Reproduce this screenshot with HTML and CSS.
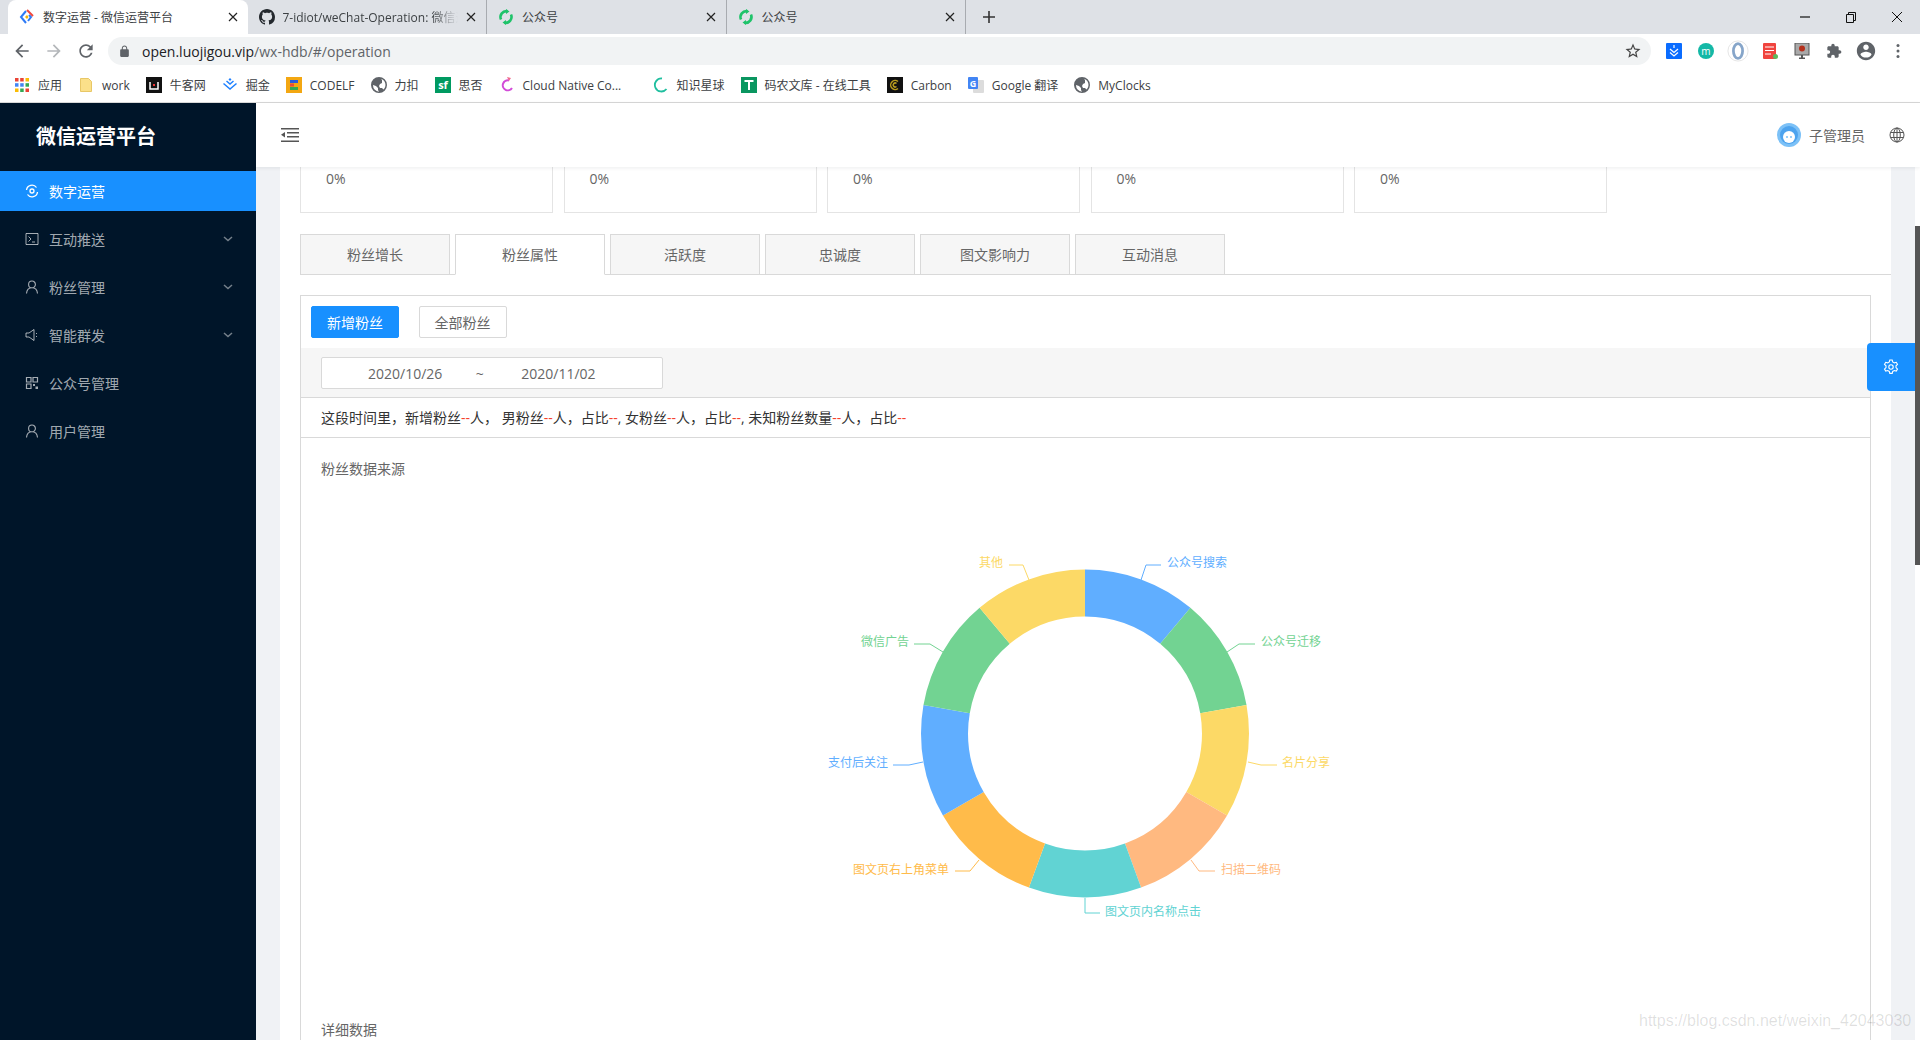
FILE: index.html
```html
<!DOCTYPE html>
<html lang="zh-CN">
<head>
    <meta charset="UTF-8">
    <title>数字运营 - 微信运营平台</title>
    <link rel="stylesheet" href="styles.css">
</head>
<body>

<svg class="defs" width="0" height="0">
    <symbol id="globe" viewBox="0 0 16 16"><path fill="#5f6368" d="M8 0a8 8 0 1 0 0 16A8 8 0 0 0 8 0zM2 8l3 1 2 2v2l1 1.8A6.5 6.5 0 0 1 2 8zm10.5 4.6L11 11H9l-1-2 1-2 2-1V3l-1-1.2a6.5 6.5 0 0 1 2.500 10.800z"/></symbol>
    <symbol id="wx" viewBox="0 0 16 16"><g fill="none" stroke="#1fc36a" stroke-width="2.600"><path d="M3 10.500A6 6 0 0 1 9.500 2.200"/><path d="M13 5.500A6 6 0 0 1 6.500 13.800"/></g><path fill="#1fc36a" d="M8 0l3.500 2.500L8 5zM8 16l-3.500-2.500L8 11z"/></symbol>
    <symbol id="close" viewBox="0 0 10 10"><path d="M1 1l8 8M9 1l-8 8" stroke="#222" stroke-width="1.200" fill="none"/></symbol>
    <symbol id="user" viewBox="0 0 14 14"><path fill="none" stroke="currentColor" stroke-width="1.100" d="M7 1a3.400 3.400 0 1 1 0 6.800A3.400 3.400 0 0 1 7 1zM1.500 13.500C1.800 10 4 7.800 7 7.800s5.200 2.200 5.500 5.700"/></symbol>
    <symbol id="chev" viewBox="0 0 10 6"><path fill="none" stroke="currentColor" stroke-width="1.500" d="M1 1l4 3.500L9 1"/></symbol>
</svg>

<header class="chrome">
    <div class="tabstrip">
        <div class="tab tab-active">
            <svg class="fav" viewBox="0 0 16 16"><path fill="none" stroke="#2f7bf6" stroke-width="2" d="M7 2L2 8l5 6"/><path fill="none" stroke="#2f7bf6" stroke-width="2" d="M10 6l2 2-3 4"/><path fill="none" stroke="#f0483e" stroke-width="2" d="M8 1l6 6"/><path fill="#f5b400" d="M6 8l2-2 1.500 2L8 10z"/></svg>
            <span class="tab-title">数字运营 - 微信运营平台</span>
            <svg class="tab-x"><use href="#close"/></svg>
        </div>
        <div class="tab">
            <svg class="fav" viewBox="0 0 16 16"><path fill="#24292e" d="M8 0C3.580 0 0 3.580 0 8c0 3.540 2.290 6.530 5.470 7.590.4.070.55-.17.55-.38 0-.19-.01-.82-.01-1.490-2.010.37-2.530-.49-2.690-.94-.09-.23-.48-.94-.82-1.130-.28-.15-.68-.52-.01-.53.63-.01 1.080.58 1.230.82.72 1.210 1.870.87 2.330.66.07-.52.28-.87.51-1.070-1.780-.2-3.640-.89-3.640-3.950 0-.87.31-1.590.82-2.150-.08-.2-.36-1.020.08-2.120 0 0 .67-.21 2.200.82.64-.18 1.320-.27 2-.27.68 0 1.360.09 2 .27 1.530-1.040 2.200-.82 2.200-.82.44 1.100.16 1.920.08 2.120.51.56.82 1.270.82 2.150 0 3.070-1.870 3.750-3.650 3.950.29.25.54.73.54 1.480 0 1.070-.01 1.930-.01 2.200 0 .21.15.46.55.38A8.013 8.013 0 0 0 16 8c0-4.420-3.580-8-8-8z"/></svg>
            <span class="tab-title tab-fade">7-idiot/weChat-Operation: 微信运营平台</span>
            <svg class="tab-x"><use href="#close"/></svg>
        </div>
        <div class="tab">
            <svg class="fav"><use href="#wx"/></svg>
            <span class="tab-title">公众号</span>
            <svg class="tab-x"><use href="#close"/></svg>
        </div>
        <div class="tab">
            <svg class="fav"><use href="#wx"/></svg>
            <span class="tab-title">公众号</span>
            <svg class="tab-x"><use href="#close"/></svg>
        </div>
        <svg class="tab-plus" viewBox="0 0 14 14"><path d="M7 1v12M1 7h12" stroke="#333" stroke-width="1.600"/></svg>
        <div class="win-btns">
            <svg viewBox="0 0 12 12"><path d="M1 6h10" stroke="#111" stroke-width="1.200"/></svg>
            <svg viewBox="0 0 12 12"><path fill="none" stroke="#111" d="M1.500 3.500h7v8h-7zM3.500 3.500v-2h7v8h-2"/></svg>
            <svg viewBox="0 0 12 12"><path d="M1 1l10 10M11 1L1 11" stroke="#111"/></svg>
        </div>
    </div>

    <div class="toolbar">
        <svg class="nav-icon" viewBox="0 0 24 24"><path fill="#5f6368" d="M20 11H7.830l5.590-5.590L12 4l-8 8 8 8 1.410-1.410L7.830 13H20v-2z"/></svg>
        <svg class="nav-icon" viewBox="0 0 24 24"><path fill="#b4b7ba" d="M12 4l-1.410 1.410L16.170 11H4v2h12.170l-5.580 5.590L12 20l8-8z"/></svg>
        <svg class="nav-icon" viewBox="0 0 24 24"><path fill="#5f6368" d="M17.650 6.350C16.200 4.900 14.210 4 12 4c-4.420 0-7.990 3.580-7.990 8s3.570 8 7.990 8c3.730 0 6.840-2.550 7.730-6h-2.080c-.82 2.330-3.040 4-5.650 4-3.310 0-6-2.690-6-6s2.690-6 6-6c1.660 0 3.140.69 4.220 1.780L13 11h7V4l-2.350 2.350z"/></svg>
        <div class="omnibox">
            <svg class="lock" viewBox="0 0 24 24"><path fill="#5f6368" d="M18 8h-1V6c0-2.760-2.240-5-5-5S7 3.240 7 6v2H6c-1.100 0-2 .9-2 2v10c0 1.100.9 2 2 2h12c1.100 0 2-.9 2-2V10c0-1.100-.9-2-2-2zm-2.900 0H8.900V6c0-1.710 1.390-3.100 3.100-3.100 1.710 0 3.100 1.390 3.100 3.100v2z"/></svg>
            <span class="url">open.luojigou.vip<span class="url-path">/wx-hdb/#/operation</span></span>
            <svg class="star" viewBox="0 0 24 24"><path fill="#444" d="M22 9.240l-7.190-.62L12 2 9.190 8.630 2 9.240l5.460 4.730L5.820 21 12 17.270 18.180 21l-1.630-7.030L22 9.240zM12 15.400l-3.760 2.270 1-4.280-3.320-2.880 4.380-.38L12 6.100l1.710 4.040 4.380.38-3.320 2.880 1 4.280L12 15.400z"/></svg>
        </div>
        <div class="exts">
            <svg viewBox="0 0 16 16"><rect width="16" height="16" fill="#0a6cff" rx="1"/><path fill="none" stroke="#fff" stroke-width="1.200" d="M4 6l4 3.500L12 6M4 9.500l4 3.500 4-3.500M8 2v3"/></svg>
            <svg viewBox="0 0 16 16"><circle cx="8" cy="8" r="8" fill="#14b8a6"/><text x="8" y="11.500" class="ext-letter">m</text></svg>
            <svg class="ext-big" viewBox="0 0 24 24"><circle cx="12" cy="12" r="11" fill="#fff" stroke="#e3e3e3"/><ellipse cx="12" cy="12" rx="5" ry="8" fill="none" stroke="#86a5c9" stroke-width="3"/></svg>
            <svg viewBox="0 0 16 16"><rect x="1" width="13" height="16" fill="#f0443e" rx="1"/><path stroke="#fff" d="M3 4h9M3 7.500h9M3 11h6"/><circle cx="13.500" cy="13.500" r="2.500" fill="#5cb85c"/></svg>
            <svg viewBox="0 0 16 16"><rect x="1" width="14" height="12" fill="#a9a9a9" stroke="#555"/><circle cx="8" cy="5.500" r="3" fill="#b5301c"/><path stroke="#555" stroke-width="2" d="M8 12v3M5 15.500h6"/></svg>
            <svg viewBox="0 0 24 24"><path fill="#5f6368" d="M20.500 11H19V7c0-1.100-.9-2-2-2h-4V3.500C13 2.120 11.880 1 10.500 1S8 2.120 8 3.500V5H4c-1.100 0-1.990.9-1.990 2v3.800H3.500c1.490 0 2.700 1.210 2.700 2.700s-1.210 2.700-2.700 2.700H2V20c0 1.100.9 2 2 2h3.800v-1.500c0-1.490 1.210-2.700 2.700-2.700 1.490 0 2.700 1.210 2.700 2.700V22H17c1.100 0 2-.9 2-2v-4h1.500c1.380 0 2.500-1.120 2.500-2.500S21.880 11 20.500 11z"/></svg>
            <svg class="ext-big" viewBox="0 0 24 24"><path fill="#5f6368" d="M12 2C6.480 2 2 6.480 2 12s4.480 10 10 10 10-4.480 10-10S17.520 2 12 2zm0 3c1.660 0 3 1.340 3 3s-1.340 3-3 3-3-1.340-3-3 1.340-3 3-3zm0 14.200c-2.500 0-4.710-1.280-6-3.220.03-1.990 4-3.080 6-3.080 1.990 0 5.970 1.090 6 3.080-1.290 1.940-3.500 3.220-6 3.220z"/></svg>
            <svg viewBox="0 0 16 16"><g fill="#5f6368"><circle cx="8" cy="2.500" r="1.500"/><circle cx="8" cy="8" r="1.500"/><circle cx="8" cy="13.500" r="1.500"/></g></svg>
        </div>
    </div>

    <div class="bookmarks">
        <div class="bm">
            <svg viewBox="0 0 16 16"><g fill="#ea4335"><rect x="1" y="1" width="3.500" height="3.500"/><rect x="6.200" y="1" width="3.500" height="3.500"/></g><rect x="11.500" y="1" width="3.500" height="3.500" fill="#fbbc05"/><g fill="#4285f4"><rect x="1" y="6.200" width="3.500" height="3.500"/><rect x="6.200" y="6.200" width="3.500" height="3.500"/></g><rect x="11.500" y="6.200" width="3.500" height="3.500" fill="#34a853"/><g fill="#fbbc05"><rect x="1" y="11.500" width="3.500" height="3.500"/></g><g fill="#34a853"><rect x="6.200" y="11.500" width="3.500" height="3.500"/></g><rect x="11.500" y="11.500" width="3.500" height="3.500" fill="#ea4335"/></svg>
            <span>应用</span>
        </div>
        <div class="bm">
            <svg viewBox="0 0 16 16"><path fill="#fbe08a" stroke="#e8c766" d="M2.500 1.500h8l3 3v10h-11z"/></svg>
            <span>work</span>
        </div>
        <div class="bm">
            <svg viewBox="0 0 16 16"><rect width="16" height="16" fill="#111"/><path fill="none" stroke="#fff" stroke-width="1.500" d="M4 5v7h8V5"/><path stroke="#e33" stroke-width="2" d="M7 8h2"/></svg>
            <span>牛客网</span>
        </div>
        <div class="bm">
            <svg viewBox="0 0 16 16"><path fill="none" stroke="#1e80ff" stroke-width="1.500" d="M1.500 6.500L8 12l6.500-5.500M4.500 4L8 7l3.500-3"/><path fill="#1e80ff" d="M8 1l1.500 1.500L8 4 6.500 2.500z"/></svg>
            <span>掘金</span>
        </div>
        <div class="bm">
            <svg viewBox="0 0 16 16"><rect width="16" height="16" fill="#f3a712"/><rect x="4" y="3" width="8" height="3" fill="#2a5bd7"/><rect x="4" y="6.500" width="4" height="3" fill="#e84a3c"/><rect x="4" y="10" width="8" height="3" fill="#34a853"/></svg>
            <span>CODELF</span>
        </div>
        <div class="bm">
            <svg><use href="#globe"/></svg>
            <span>力扣</span>
        </div>
        <div class="bm">
            <svg viewBox="0 0 16 16"><rect width="16" height="16" fill="#009a61"/><text x="8" y="12" class="bm-letter">sf</text></svg>
            <span>思否</span>
        </div>
        <div class="bm bm-cloud">
            <svg viewBox="0 0 16 16"><path fill="none" stroke="#d24bd8" stroke-width="2" d="M10 3.500A5 5 0 1 0 13 11"/><path fill="#f06a8a" d="M8 0l4 1-2 3z"/></svg>
            <span>Cloud Native Co...</span>
        </div>
        <div class="bm">
            <svg viewBox="0 0 16 16"><path fill="none" stroke="#1fbf9f" stroke-width="1.800" d="M9 1.500A6.500 6.500 0 1 0 13.500 12"/></svg>
            <span>知识星球</span>
        </div>
        <div class="bm">
            <svg viewBox="0 0 16 16"><rect width="16" height="16" fill="#0a9660"/><path fill="#fff" d="M3.500 3h9v2H9v8H7V5H3.500z"/></svg>
            <span>码农文库 - 在线工具</span>
        </div>
        <div class="bm">
            <svg viewBox="0 0 16 16"><rect width="16" height="16" fill="#111"/><path fill="none" stroke="#b79b1e" stroke-width="1.500" d="M11 4.500A4.500 4.500 0 1 0 11 11.500M9.500 6.500a2 2 0 1 0 0 3"/></svg>
            <span>Carbon</span>
        </div>
        <div class="bm">
            <svg viewBox="0 0 16 16"><rect x="5" y="3" width="11" height="13" rx="1" fill="#dcdcdc"/><rect y="0" width="10" height="12" rx="1" fill="#4285f4"/><text x="5" y="9.500" class="bm-letter bm-letter-g">G</text></svg>
            <span>Google 翻译</span>
        </div>
        <div class="bm">
            <svg><use href="#globe"/></svg>
            <span>MyClocks</span>
        </div>
    </div>
</header>

<div class="app">
    <aside class="sidebar">
        <div class="logo">微信运营平台</div>
        <ul class="menu">
            <li class="menu-item active">
                <svg class="menu-icon" viewBox="0 0 14 14"><g fill="none" stroke="currentColor" stroke-width="1.300"><circle cx="7" cy="7" r="2"/><path d="M1.500 6A5.500 5.500 0 0 1 11.500 3.500M12.500 8A5.500 5.500 0 0 1 2.500 10.500"/></g></svg>
                <span>数字运营</span>
            </li>
            <li class="menu-item">
                <svg class="menu-icon" viewBox="0 0 14 14"><path fill="none" stroke="currentColor" d="M1 1.500h12v11H1zM3.500 4.500L6 7l-2.500 2.500M7 10h3"/></svg>
                <span>互动推送</span>
                <svg class="menu-chev"><use href="#chev"/></svg>
            </li>
            <li class="menu-item">
                <svg class="menu-icon"><use href="#user"/></svg>
                <span>粉丝管理</span>
                <svg class="menu-chev"><use href="#chev"/></svg>
            </li>
            <li class="menu-item">
                <svg class="menu-icon" viewBox="0 0 14 14"><path fill="none" stroke="currentColor" d="M1 5h3l5-3.500v11L4 9H1zM11.500 5v1M11.500 8v1"/></svg>
                <span>智能群发</span>
                <svg class="menu-chev"><use href="#chev"/></svg>
            </li>
            <li class="menu-item">
                <svg class="menu-icon" viewBox="0 0 14 14"><path fill="none" stroke="currentColor" stroke-width="1.200" d="M1.500 1.500h4.500v4.500H1.500zM8 1.500h4.500v4.500H8zM1.500 8h4.500v4.500H1.500z"/><path fill="currentColor" d="M8 8h2v2H8zM10.500 10.500h2.500V13h-2.500z"/></svg>
                <span>公众号管理</span>
            </li>
            <li class="menu-item">
                <svg class="menu-icon"><use href="#user"/></svg>
                <span>用户管理</span>
            </li>
        </ul>
    </aside>

    <div class="main">
        <div class="topbar">
            <svg class="fold" viewBox="0 0 18 14"><path fill="#555" d="M0 0h18v1.500H0zM6 4h12v1.500H6zM6 8h12v1.500H6zM0 12.500h18V14H0zM4 4v5.500L0 6.750z"/></svg>
            <div class="topbar-right">
                <svg class="avatar" viewBox="0 0 24 24"><circle cx="12" cy="12" r="12" fill="#7cc1f7"/><circle cx="12" cy="12" r="9" fill="#4da3ee"/><circle cx="12" cy="14" r="6" fill="#fff"/><circle cx="10" cy="14" r="1" fill="#7cc1f7"/><circle cx="14" cy="14" r="1" fill="#7cc1f7"/></svg>
                <span class="username">子管理员</span>
                <svg class="lang" viewBox="0 0 16 16"><g fill="none" stroke="#555"><circle cx="8" cy="8" r="7"/><ellipse cx="8" cy="8" rx="3.300" ry="7"/><path d="M8 1v14M1.500 5.500h13M1.500 10.500h13"/></g></svg>
            </div>
        </div>

        <div class="content-row">
            <div class="content">
                <div class="page">
                    <div class="cards">
                        <div class="card">0%</div>
                        <div class="card">0%</div>
                        <div class="card">0%</div>
                        <div class="card">0%</div>
                        <div class="card">0%</div>
                    </div>

                    <div class="tabs">
                        <div class="data-tab">粉丝增长</div>
                        <div class="data-tab current">粉丝属性</div>
                        <div class="data-tab">活跃度</div>
                        <div class="data-tab">忠诚度</div>
                        <div class="data-tab">图文影响力</div>
                        <div class="data-tab">互动消息</div>
                    </div>

                    <div class="panel">
                        <div class="btn-row">
                            <button class="btn btn-primary">新增粉丝</button>
                            <button class="btn">全部粉丝</button>
                        </div>
                        <div class="filter">
                            <div class="range">
                                <span>2020/10/26</span>
                                <span class="tilde">~</span>
                                <span>2020/11/02</span>
                            </div>
                        </div>
                        <div class="summary">这段时间里，新增粉丝<b>--</b>人， 男粉丝<b>--</b>人，占比<b>--</b>, 女粉丝<b>--</b>人，占比<b>--</b>, 未知粉丝数量<b>--</b>人，占比<b>--</b></div>
                        <div class="section-title section-first">粉丝数据来源</div>
                        <svg class="chart" viewBox="301 479 1569 541">
                            <!-- 9 equal slices, each dash is 40 of the 360 pathLength -->
                            <g fill="none" stroke-width="47" transform="rotate(-90 1085 733.500)">
                                <circle cx="1085" cy="733.500" r="140.500" pathLength="360" stroke-dasharray="40 320" stroke-dashoffset="0" stroke="#60aeff"/>
                                <circle cx="1085" cy="733.500" r="140.500" pathLength="360" stroke-dasharray="40 320" stroke-dashoffset="-40" stroke="#72d392"/>
                                <circle cx="1085" cy="733.500" r="140.500" pathLength="360" stroke-dasharray="40 320" stroke-dashoffset="-80" stroke="#fcd966"/>
                                <circle cx="1085" cy="733.500" r="140.500" pathLength="360" stroke-dasharray="40 320" stroke-dashoffset="-120" stroke="#ffb980"/>
                                <circle cx="1085" cy="733.500" r="140.500" pathLength="360" stroke-dasharray="40 320" stroke-dashoffset="-160" stroke="#61d3d3"/>
                                <circle cx="1085" cy="733.500" r="140.500" pathLength="360" stroke-dasharray="40 320" stroke-dashoffset="-200" stroke="#ffbb4a"/>
                                <circle cx="1085" cy="733.500" r="140.500" pathLength="360" stroke-dasharray="40 320" stroke-dashoffset="-240" stroke="#60aeff"/>
                                <circle cx="1085" cy="733.500" r="140.500" pathLength="360" stroke-dasharray="40 320" stroke-dashoffset="-280" stroke="#72d392"/>
                                <circle cx="1085" cy="733.500" r="140.500" pathLength="360" stroke-dasharray="40 320" stroke-dashoffset="-320" stroke="#fcd966"/>
                            </g>
                            <g class="leaders" fill="none">
                                <polyline stroke="#60aeff" points="1141,580 1146,565 1161,565"/>
                                <polyline stroke="#72d392" points="1227,652 1239,644 1255,644"/>
                                <polyline stroke="#fcd966" points="1248,762 1261,765 1277,765"/>
                                <polyline stroke="#ffb980" points="1191,860 1199,871 1215,871"/>
                                <polyline stroke="#61d3d3" points="1085,898 1085,913 1100,913"/>
                                <polyline stroke="#ffbb4a" points="979,860 970,871 955,871"/>
                                <polyline stroke="#60aeff" points="923,762 909,765 893,765"/>
                                <polyline stroke="#72d392" points="943,652 930,644 914,644"/>
                                <polyline stroke="#fcd966" points="1029,580 1023,565 1009,565"/>
                            </g>
                            <g class="pie-labels">
                                <text x="1167" y="567" fill="#60aeff">公众号搜索</text>
                                <text x="1261" y="646" fill="#72d392">公众号迁移</text>
                                <text x="1282" y="767" fill="#fcd966">名片分享</text>
                                <text x="1221" y="874" fill="#ffb980">扫描二维码</text>
                                <text x="1105" y="916" fill="#61d3d3">图文页内名称点击</text>
                                <text x="853" y="874" fill="#ffbb4a">图文页右上角菜单</text>
                                <text x="828" y="767" fill="#60aeff">支付后关注</text>
                                <text x="861" y="646" fill="#72d392">微信广告</text>
                                <text x="979" y="567" fill="#fcd966">其他</text>
                            </g>
                        </svg>
                        <div class="section-title">详细数据</div>
                    </div>
                </div>
            </div>
            <div class="scrollbar"><div class="scroll-thumb"></div></div>
        </div>
    </div>
</div>

<div class="settings">
    <svg viewBox="0 0 16 16"><g fill="none" stroke="#fff" stroke-width="1.100"><circle cx="8" cy="8" r="2.200"/><path d="M6.800 1h2.400l.5 2 1.600.9 2-.6 1.200 2.100-1.500 1.400v1.800l1.500 1.400-1.200 2.100-2-.6-1.600.9-.5 2H6.800l-.5-2-1.600-.9-2 .6-1.200-2.100 1.500-1.400V6.800L1.500 5.400l1.200-2.100 2 .6 1.600-.9z"/></g></svg>
</div>
<div class="watermark">https://blog.csdn.net/weixin_42043030</div>

</body>
</html>
```

FILE: styles.css
```css
/* General styling */
* {
    box-sizing: border-box;
}

body {
    margin: 0;
    height: 100vh;
    overflow: hidden;
    display: flex;
    flex-direction: column;
    font-family: "Open Sans", "Noto Sans CJK SC", sans-serif;
    font-size: 14px;
    color: #666;
    background: #fff;
}

.defs {
    position: absolute;
}

/* Browser chrome */
.chrome {
    flex: none;
}

.tabstrip {
    display: flex;
    align-items: center;
    height: 34px;
    padding-left: 8px;
    background: #dee1e6;
}

.tab {
    display: flex;
    align-items: center;
    width: 239.500px;
    height: 34px;
    padding: 0 10px 0 11px;
    border-right: 1px solid #a8abb0;
    font-size: 12px;
    color: #3c4043;
}

.tab:nth-child(2) {
    padding-left: 11px;
}

.tab-active {
    height: 34px;
    background: #fff;
    border-right: none;
    border-radius: 8px 8px 0 0;
}

.fav {
    flex: none;
    width: 16px;
    height: 16px;
    margin-right: 8px;
}

.tab-title {
    flex: 1;
    min-width: 0;
    white-space: nowrap;
    overflow: hidden;
}

.tab-fade {
    -webkit-mask-image: linear-gradient(to right, #000 85%, transparent);
    mask-image: linear-gradient(to right, #000 85%, transparent);
}

.tab-x {
    flex: none;
    width: 10px;
    height: 10px;
    margin-left: 8px;
}

.tab-plus {
    width: 14px;
    height: 14px;
    margin-left: 16px;
}

.win-btns {
    display: flex;
    gap: 34px;
    margin-left: auto;
    margin-right: 17px;
}

.win-btns svg {
    width: 12px;
    height: 12px;
}

.toolbar {
    display: flex;
    align-items: center;
    height: 34px;
    padding-left: 12px;
    background: #fff;
}

.nav-icon {
    flex: none;
    width: 20px;
    height: 20px;
    margin-right: 12px;
}

.omnibox {
    display: flex;
    align-items: center;
    width: 1543px;
    height: 28px;
    padding: 0 9px 0 10px;
    border-radius: 14px;
    background: #f1f3f4;
}

.lock {
    width: 13px;
    height: 13px;
    margin-right: 11px;
}

.url {
    flex: 1;
    font-size: 14px;
    color: #202124;
}

.url-path {
    color: #5f6368;
}

.star {
    width: 18px;
    height: 18px;
}

.exts {
    display: flex;
    align-items: center;
    margin-left: 7px;
}

.exts svg {
    width: 16px;
    height: 16px;
    margin: 0 8px;
}

.exts .ext-big {
    width: 22px;
    height: 22px;
    margin: 0 5px;
}

.ext-letter {
    font-size: 10px;
    fill: #fff;
    text-anchor: middle;
}

.bookmarks {
    display: flex;
    align-items: center;
    gap: 16px;
    height: 35px;
    padding-left: 14px;
    border-bottom: 1px solid #d8d8d8;
    background: #fff;
    font-size: 12px;
    color: #3c4043;
}

.bm {
    display: flex;
    align-items: center;
    gap: 8px;
    white-space: nowrap;
}

.bm svg {
    flex: none;
    width: 16px;
    height: 16px;
}

.bm-cloud {
    width: 138px;
}

.bm-letter {
    font-size: 11px;
    font-weight: bold;
    fill: #fff;
    text-anchor: middle;
}

.bm-letter-g {
    font-size: 9px;
}

/* App layout */
.app {
    flex: 1;
    display: flex;
    min-height: 0;
}

.sidebar {
    flex: none;
    width: 256px;
    background: #001529;
}

.logo {
    height: 68px;
    padding-left: 36px;
    line-height: 68px;
    font-size: 20px;
    font-weight: bold;
    color: #fff;
}

.menu {
    list-style: none;
    margin: 0;
    padding: 0;
}

.menu-item {
    display: flex;
    align-items: center;
    height: 40px;
    margin-bottom: 8px;
    padding: 0 24px;
    color: rgba(255, 255, 255, 0.65);
}

.menu-item.active {
    background: #1890ff;
    color: #fff;
}

.menu-icon {
    flex: none;
    width: 14px;
    height: 14px;
    margin-right: 10px;
    margin-left: 1px;
}

.menu-chev {
    width: 10px;
    height: 6px;
    margin-left: auto;
    margin-right: -1px;
    opacity: 0.7;
}

.main {
    flex: 1;
    min-width: 0;
    display: flex;
    flex-direction: column;
}

.topbar {
    flex: none;
    position: relative;
    z-index: 2;
    display: flex;
    align-items: center;
    justify-content: space-between;
    height: 64px;
    padding: 0 15px 0 25px;
    background: #fff;
    box-shadow: 0 1px 4px rgba(0, 21, 41, 0.08);
}

.fold {
    width: 18px;
    height: 14px;
}

.topbar-right {
    display: flex;
    align-items: center;
}

.avatar {
    width: 24px;
    height: 24px;
    margin-right: 8px;
}

.username {
    margin-right: 24px;
}

.lang {
    width: 16px;
    height: 16px;
}

.content-row {
    flex: 1;
    min-height: 0;
    display: flex;
}

.content {
    flex: 1;
    min-width: 0;
    overflow: hidden;
    padding: 0 24px;
    background: #f0f2f5;
}

.page {
    height: 100%;
    overflow: hidden;
    padding: 0 20px;
    background: #fff;
}

.scrollbar {
    flex: none;
    width: 5px;
    padding-top: 59px;
    background: #fff;
}

.scroll-thumb {
    height: 339px;
    background: #555;
}

/* Stat cards, cut off by the header because the page is scrolled */
.cards {
    display: flex;
    gap: 10.500px;
}

.card {
    width: 253px;
    height: 46px;
    padding: 2px 25px 0;
    line-height: 20px;
    border: 1px solid #e4e4e4;
    border-top: none;
}

/* Data tabs */
.tabs {
    display: flex;
    gap: 5px;
    margin: 21px -20px 0 0;
    padding-bottom: 0;
    border-bottom: 1px solid #d9d9d9;
}

.data-tab {
    width: 150px;
    height: 41px;
    margin-bottom: -1px;
    line-height: 40px;
    text-align: center;
    border: 1px solid #d9d9d9;
    background: #f6f6f6;
}

.data-tab.current {
    background: #fff;
    border-bottom-color: #fff;
}

.panel {
    margin-top: 20px;
    border: 1px solid #d9d9d9;
    border-bottom: none;
}

.btn-row {
    display: flex;
    gap: 19.500px;
    padding: 10px;
}

.btn {
    width: 88px;
    height: 32px;
    padding: 0;
    font: inherit;
    color: #666;
    background: #fff;
    border: 1px solid #d9d9d9;
    border-radius: 2px;
}

.btn-primary {
    color: #fff;
    background: #1890ff;
    border-color: #1890ff;
}

.filter {
    height: 50px;
    padding: 9px 20px;
    background: #f6f6f6;
    border-bottom: 1px solid #d9d9d9;
}

.range {
    display: flex;
    align-items: center;
    width: 342px;
    height: 32px;
    padding-left: 46px;
    background: #fff;
    border: 1px solid #d9d9d9;
    border-radius: 2px;
}

.tilde {
    width: 79px;
    padding-right: 4px;
    text-align: center;
}

.summary {
    height: 40px;
    padding-left: 20px;
    line-height: 39px;
    color: #333;
    border-bottom: 1px solid #d9d9d9;
}

.summary b {
    color: #f5412d;
    font-weight: normal;
}

.section-title {
    padding-left: 20px;
    line-height: 20px;
}

.section-first {
    margin-top: 21px;
}

.chart {
    display: block;
    width: 1569px;
    height: 541px;
}

.pie-labels {
    font-size: 12px;
}

/* Overlays */
.settings {
    position: absolute;
    left: 1867px;
    top: 343px;
    display: flex;
    align-items: center;
    justify-content: center;
    width: 48px;
    height: 48px;
    background: #1890ff;
    border-radius: 4px 0 0 4px;
}

.settings svg {
    width: 16px;
    height: 16px;
}

.watermark {
    position: absolute;
    left: 1639px;
    top: 1012px;
    font-family: "Liberation Sans", sans-serif;
    font-size: 16px;
    color: rgba(0, 0, 0, 0.13);
    white-space: nowrap;
}
```
